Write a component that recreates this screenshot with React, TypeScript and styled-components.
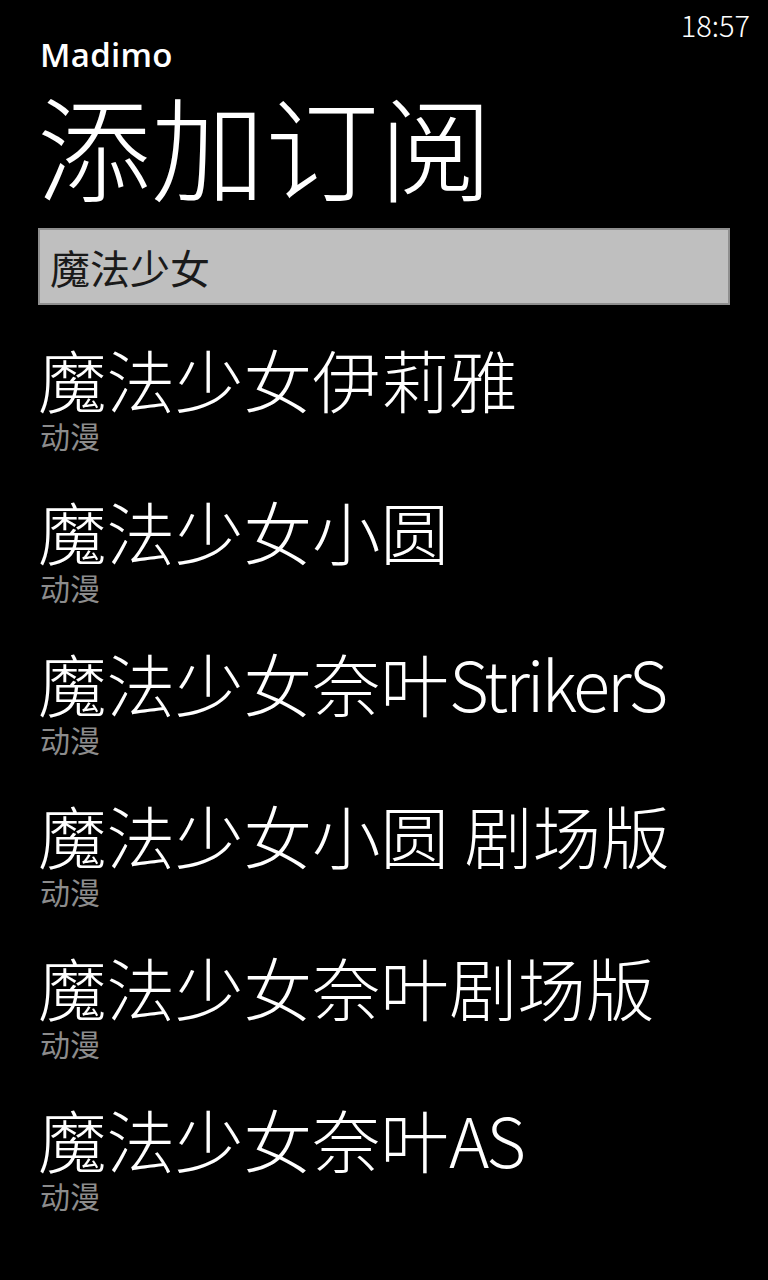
import React from "react";
import styled, { createGlobalStyle } from "styled-components";

const Global = createGlobalStyle`
  html, body { margin: 0; padding: 0; background: #000; }
  body { font-family: "Noto Sans CJK SC", "Noto Sans", sans-serif; color: #fff; }
`;

const Screen = styled.div`
  width: 768px;
  min-height: 1280px;
  background: #000;
  display: flex;
  flex-direction: column;
  overflow: hidden;
`;

const StatusBar = styled.div`
  height: 44px;
  display: flex;
  justify-content: flex-end;
  align-items: flex-start;
  padding: 0 18px 0 0;
`;

const Clock = styled.span`
  font-family: "Noto Sans CJK SC", sans-serif;
  font-weight: 300;
  font-size: 29px;
  line-height: 48px;
  color: #fff;
`;

const Header = styled.header`
  display: flex;
  flex-direction: column;
  padding: 0 38px 0 40px;
`;

const AppName = styled.div`
  font-family: "Open Sans", sans-serif;
  font-weight: 600;
  font-size: 33px;
  line-height: 30px;
  margin-top: -4px;
  letter-spacing: 0.3px;
`;

const PageTitle = styled.h1`
  margin: 14px 0 0 -3px;
  font-family: "Noto Sans CJK SC", sans-serif;
  font-weight: 300;
  font-size: 114px;
  line-height: 120px;
`;

const SearchBox = styled.div`
  margin: 24px 38px 0 38px;
  height: 77px;
  box-sizing: border-box;
  background: #bfbfbf;
  border: 2px solid #8f8f8f;
  display: flex;
  align-items: center;
  padding: 0 10px;
  font-family: "Noto Sans CJK SC", sans-serif;
  font-size: 40px;
  color: #1a1a1a;
`;

const List = styled.ul`
  list-style: none;
  margin: 36px 0 0 0;
  padding: 0 0 0 40px;
  display: flex;
  flex-direction: column;
  gap: 40px;
`;

const Item = styled.li`
  display: flex;
  flex-direction: column;
`;

const ItemTitle = styled.div`
  font-family: "Noto Sans CJK SC", sans-serif;
  font-weight: 300;
  font-size: 68.5px;
  line-height: 76px;
  margin-left: -2px;
  white-space: pre;
`;

const Latin = styled.span`
  letter-spacing: -3px;
`;

const ItemSub = styled.div`
  font-family: "Noto Sans CJK SC", sans-serif;
  font-size: 30px;
  line-height: 36px;
  color: #8c8c8c;
`;

const items = [
  "魔法少女伊莉雅",
  "魔法少女小圆",
  "魔法少女奈叶StrikerS",
  "魔法少女小圆 剧场版",
  "魔法少女奈叶剧场版",
  "魔法少女奈叶AS",
];

function renderTitle(t: string) {
  return t
    .split(/([A-Za-z]+)/)
    .filter((p) => p.length > 0)
    .map((p, i) => (/^[A-Za-z]+$/.test(p) ? <Latin key={i}>{p}</Latin> : <span key={i}>{p}</span>));
}

export default function App() {
  return (
    <Screen>
      <Global />
      <StatusBar>
        <Clock>18:57</Clock>
      </StatusBar>
      <Header>
        <AppName>Madimo</AppName>
        <PageTitle>添加订阅</PageTitle>
      </Header>
      <SearchBox>魔法少女</SearchBox>
      <List>
        {items.map((t) => (
          <Item key={t}>
            <ItemTitle>{renderTitle(t)}</ItemTitle>
            <ItemSub>动漫</ItemSub>
          </Item>
        ))}
      </List>
    </Screen>
  );
}
